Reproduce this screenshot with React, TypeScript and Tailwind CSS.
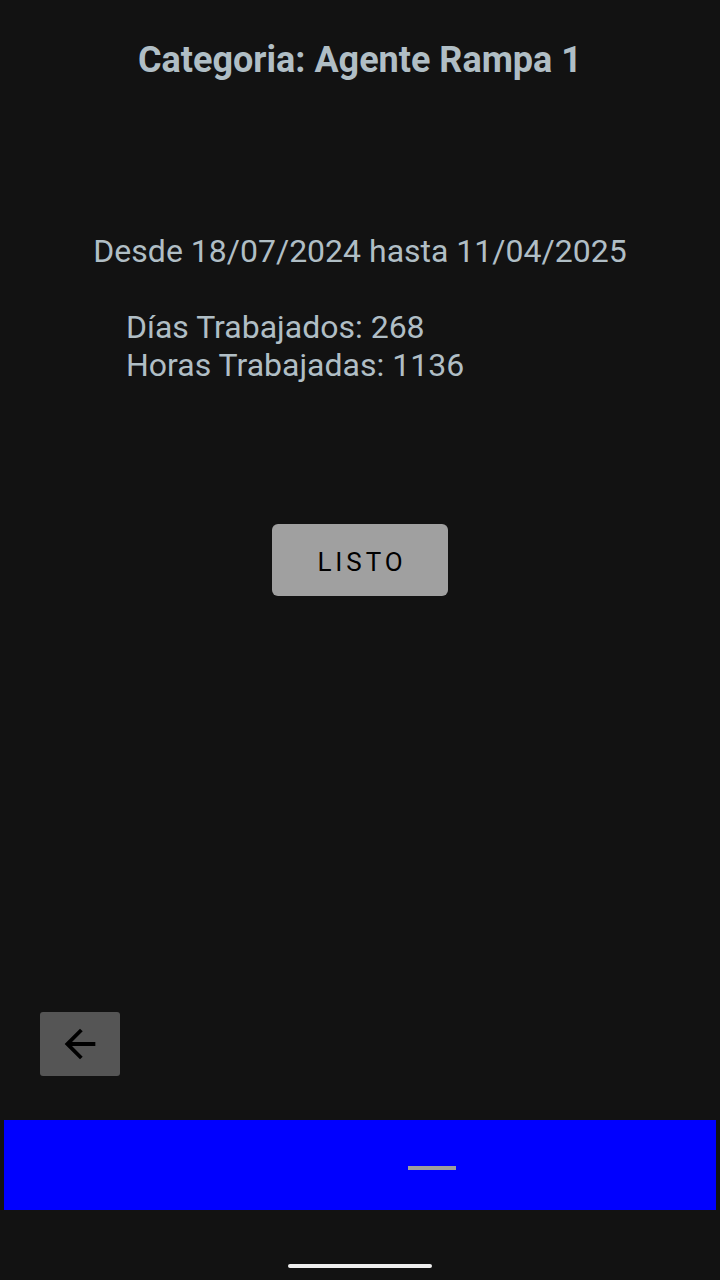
import React from 'react';
import { MdArrowBack } from 'react-icons/md';

const App: React.FC = () => {
    return (
        <div className="w-[720px] h-[1280px] bg-[#121212] flex flex-col font-['Roboto',sans-serif] text-[#b0bec5]">
            {/* Header */}
            <h1 className="mt-[38px] text-center text-[36px] leading-[44px] font-bold">
                Categoria: Agente Rampa 1
            </h1>

            {/* Rango de fechas */}
            <p className="mt-[150px] text-center text-[32px] leading-[38px]">
                Desde 18/07/2024 hasta 11/04/2025
            </p>

            {/* Totales */}
            <div className="mt-[38px] pl-[126px] text-[32px] leading-[38px]">
                <p>Días Trabajados: 268</p>
                <p>Horas Trabajadas: 1136</p>
            </div>

            <div className="mt-[140px] flex justify-center">
                <button className="w-[176px] h-[72px] pt-[4px] pl-[4px] rounded-[6px] bg-[#a0a0a0] text-black text-[26px] font-normal tracking-[0.15em]">
                    LISTO
                </button>
            </div>

            <div className="mt-[416px] pl-[40px]">
                <button className="w-[80px] h-[64px] rounded-[3px] bg-[#555555] flex items-center justify-center">
                    <MdArrowBack className="text-black" size={46} />
                </button>
            </div>

            {/* Barra inferior */}
            <div className="mt-[44px] mx-[4px] h-[90px] bg-[#0000ff]">
                <div className="mt-[46px] ml-[404px] w-[48px] h-[4px] bg-[#9e9e9e]" />
            </div>

            <div className="mt-[54px] flex justify-center">
                <div className="w-[144px] h-[4px] rounded-full bg-[#eeeeee]" />
            </div>
        </div>
    );
};

export default App;
